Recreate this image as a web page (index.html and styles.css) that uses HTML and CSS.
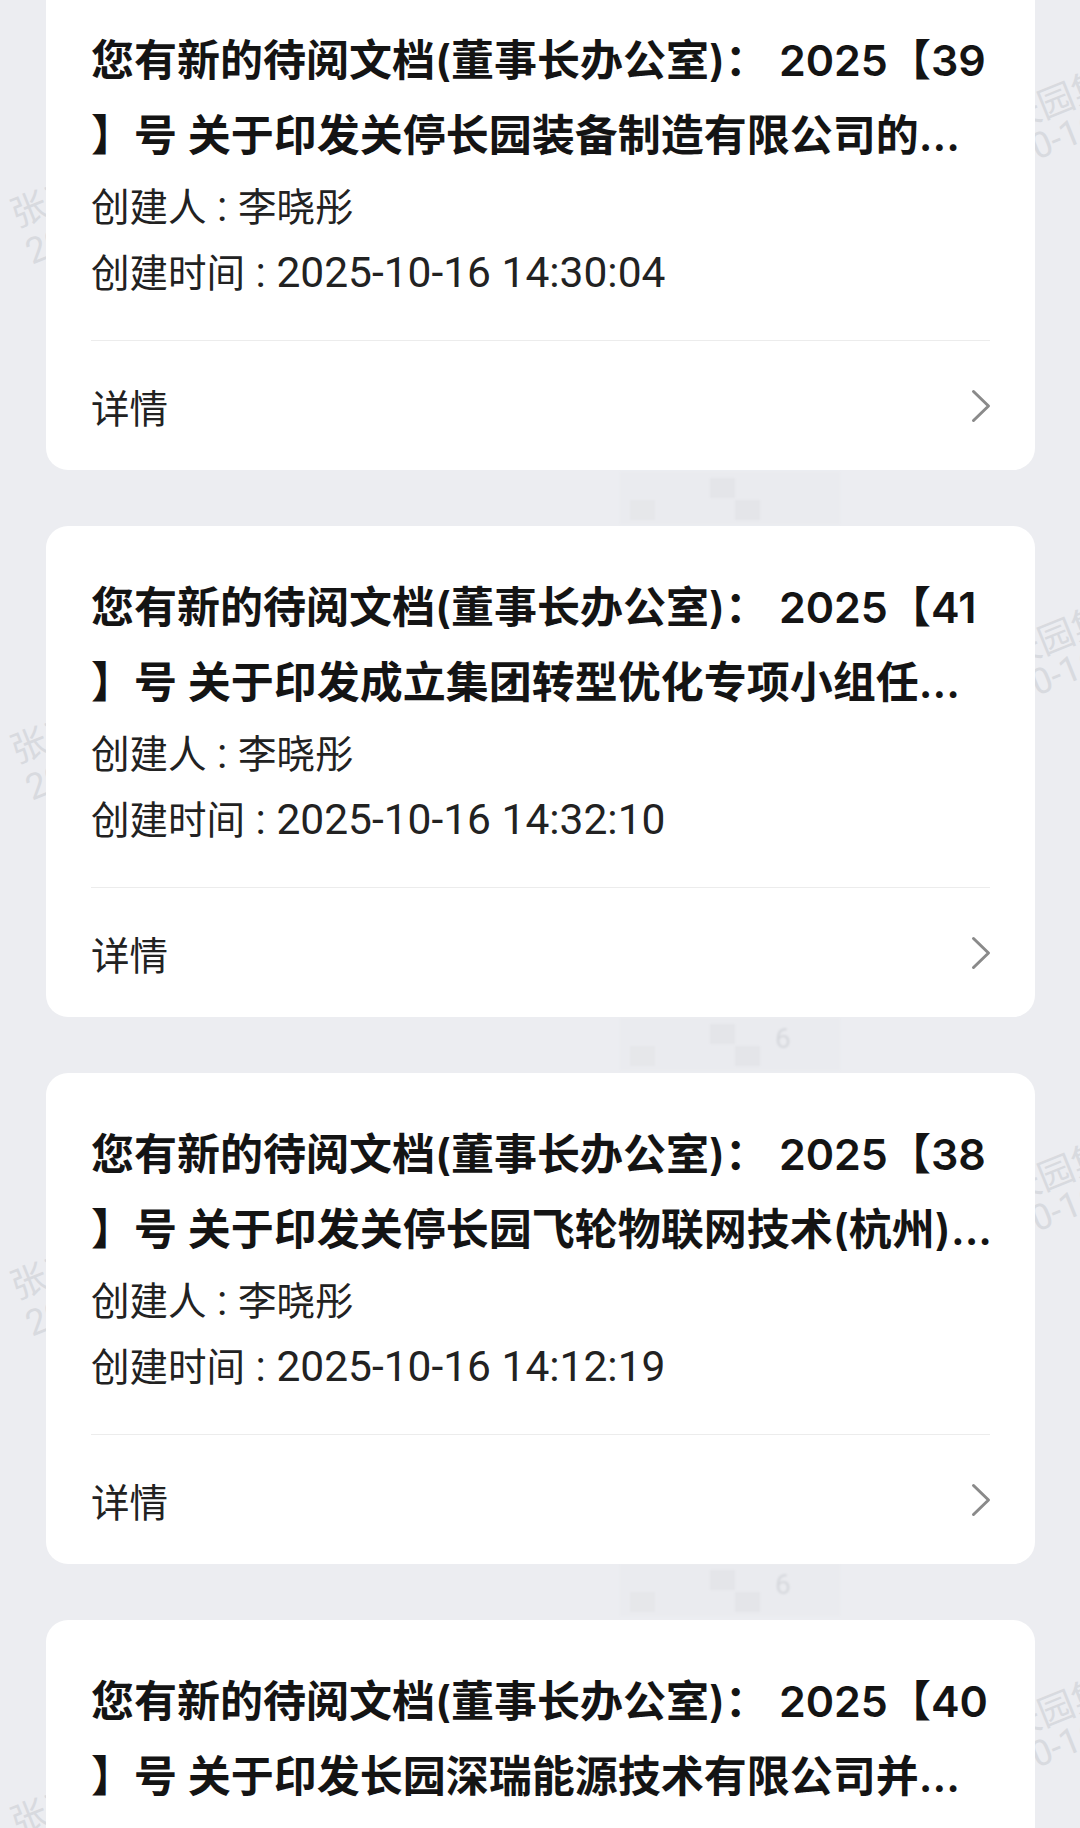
FILE: index.html
```html
<!DOCTYPE html>
<html lang="zh-CN">
<head>
<meta charset="utf-8">
<title>待阅文档</title>
<link rel="stylesheet" href="styles.css">
</head>
<body>
<div class="watermarks" aria-hidden="true">
  <span class="wm wm-left" style="top:198px">张三<br>2025</span>
  <span class="wm wm-left" style="top:734px">张三<br>2025</span>
  <span class="wm wm-left" style="top:1270px">张三<br>2025</span>
  <span class="wm wm-left" style="top:1806px">张三<br>2025</span>
  <span class="wm wm-right-a" style="top:103px">长园集团</span>
  <span class="wm wm-right-a" style="top:639px">长园集团</span>
  <span class="wm wm-right-a" style="top:1175px">长园集团</span>
  <span class="wm wm-right-a" style="top:1711px">长园集团</span>
  <span class="wm wm-right-b" style="top:172px">2025-10-16</span>
  <span class="wm wm-right-b" style="top:708px">2025-10-16</span>
  <span class="wm wm-right-b" style="top:1244px">2025-10-16</span>
  <span class="wm wm-right-b" style="top:1780px">2025-10-16</span>
  <span class="patch" style="top:472px"></span>
  <span class="patch" style="top:1018px"><i class="wm-num">6</i></span>
  <span class="patch" style="top:1564px"><i class="wm-num">6</i></span>
</div>

<main class="list">
  <article class="card">
    <h2 class="title">
      <span class="line">您有新的待阅文档(董事长办公室)： 2025【39</span>
      <span class="line">】号 关于印发关停长园装备制造有限公司的...</span>
    </h2>
    <div class="meta">
      <p><span class="k">创建人</span> : <span class="k">李晓彤</span></p>
      <p><span class="k">创建时间</span> : 2025-10-16 14:30:04</p>
    </div>
    <a class="detail" href="#">
      <span>详情</span>
      <svg class="chev" viewBox="0 0 20 34" width="20" height="34"><path d="M2.5 2.5 L17.5 17 L2.5 31.5" fill="none" stroke="currentColor" stroke-width="3" stroke-linecap="round" stroke-linejoin="round"/></svg>
    </a>
  </article>

  <article class="card">
    <h2 class="title">
      <span class="line">您有新的待阅文档(董事长办公室)： 2025【41</span>
      <span class="line">】号 关于印发成立集团转型优化专项小组任...</span>
    </h2>
    <div class="meta">
      <p><span class="k">创建人</span> : <span class="k">李晓彤</span></p>
      <p><span class="k">创建时间</span> : 2025-10-16 14:32:10</p>
    </div>
    <a class="detail" href="#">
      <span>详情</span>
      <svg class="chev" viewBox="0 0 20 34" width="20" height="34"><path d="M2.5 2.5 L17.5 17 L2.5 31.5" fill="none" stroke="currentColor" stroke-width="3" stroke-linecap="round" stroke-linejoin="round"/></svg>
    </a>
  </article>

  <article class="card">
    <h2 class="title">
      <span class="line">您有新的待阅文档(董事长办公室)： 2025【38</span>
      <span class="line">】号 关于印发关停长园飞轮物联网技术(杭州)...</span>
    </h2>
    <div class="meta">
      <p><span class="k">创建人</span> : <span class="k">李晓彤</span></p>
      <p><span class="k">创建时间</span> : 2025-10-16 14:12:19</p>
    </div>
    <a class="detail" href="#">
      <span>详情</span>
      <svg class="chev" viewBox="0 0 20 34" width="20" height="34"><path d="M2.5 2.5 L17.5 17 L2.5 31.5" fill="none" stroke="currentColor" stroke-width="3" stroke-linecap="round" stroke-linejoin="round"/></svg>
    </a>
  </article>

  <article class="card">
    <h2 class="title">
      <span class="line">您有新的待阅文档(董事长办公室)： 2025【40</span>
      <span class="line">】号 关于印发长园深瑞能源技术有限公司并...</span>
    </h2>
    <div class="meta">
      <p><span class="k">创建人</span> : <span class="k">李晓彤</span></p>
      <p><span class="k">创建时间</span> : 2025-10-16 14:20:41</p>
    </div>
    <a class="detail" href="#">
      <span>详情</span>
      <svg class="chev" viewBox="0 0 20 34" width="20" height="34"><path d="M2.5 2.5 L17.5 17 L2.5 31.5" fill="none" stroke="currentColor" stroke-width="3" stroke-linecap="round" stroke-linejoin="round"/></svg>
    </a>
  </article>
</main>
</body>
</html>
```

FILE: styles.css
```css
* { box-sizing: border-box; }

html, body {
  margin: 0;
  padding: 0;
}

body {
  background: #ecedf1;
  font-family: Roboto, "Noto Sans CJK SC", "Noto Sans", sans-serif;
  color: #1a1a1a;
  width: 1080px;
  height: 1828px;
  overflow: hidden;
  position: relative;
}

.watermarks {
  position: absolute;
  inset: 0;
  z-index: 0;
  pointer-events: none;
}

.wm {
  position: absolute;
  font-size: 36px;
  line-height: 40px;
  color: #d8dadf;
  transform: rotate(-22deg);
  transform-origin: left top;
  white-space: nowrap;
}

.wm-left { left: 5px; }
.wm-right-a { left: 999px; }
.wm-right-b { left: 922px; }

.patch {
  position: absolute;
  left: 620px;
  width: 220px;
  height: 52px;
  background:
    linear-gradient(#e4e5e9, #e4e5e9) 90px 6px / 25px 20px no-repeat,
    linear-gradient(#e6e7ea, #e6e7ea) 10px 28px / 25px 20px no-repeat,
    linear-gradient(#e4e5e9, #e4e5e9) 115px 28px / 25px 20px no-repeat,
    #eaebef;
  filter: blur(1px);
}

.wm-num {
  position: absolute;
  left: 155px;
  top: 4px;
  font-style: normal;
  font-size: 28px;
  color: #d6d8dd;
}

.list {
  position: relative;
  z-index: 1;
  display: flex;
  flex-direction: column;
  gap: 56px;
  margin-top: -21px;
}

.card {
  background: #ffffff;
  border-radius: 22px;
  margin: 0 45px 0 46px;
  padding: 44px 45px 0 45px;
}

.title {
  margin: 0;
  font-family: Inter, "Noto Sans CJK SC", sans-serif;
  font-feature-settings: "calt" 0;
  font-size: 43px;
  font-weight: 600;
  line-height: 75px;
  color: #141414;
}

.title .line {
  display: block;
  white-space: nowrap;
}

.meta {
  margin-top: 1px;
  padding-bottom: 34px;
  border-bottom: 1px solid #ececec;
}

.meta p {
  margin: 0;
  height: 66px;
  font-size: 42.5px;
  line-height: 66px;
  color: #222222;
}

.meta .k {
  font-size: 38.5px;
  line-height: 1;
}

.detail {
  display: flex;
  align-items: center;
  justify-content: space-between;
  height: 129px;
  text-decoration: none;
  font-size: 38.5px;
  color: #222222;
}

.chev {
  color: #8a8a8a;
  margin-right: -1px;
}
```
